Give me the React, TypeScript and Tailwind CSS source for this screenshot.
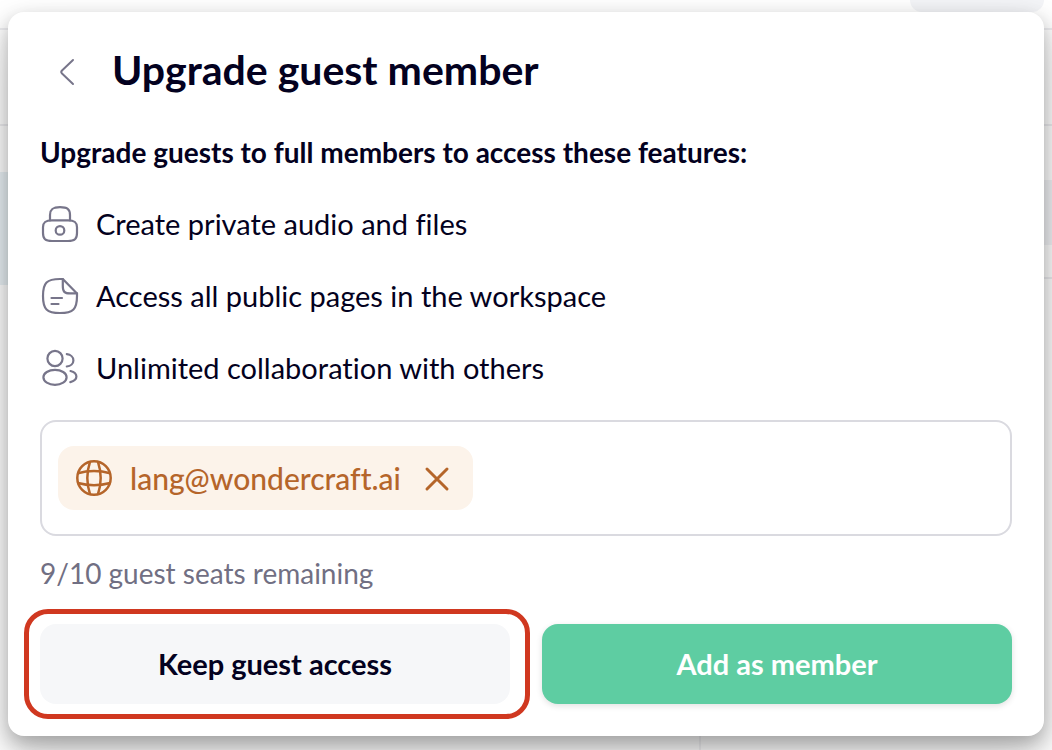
import type { ReactNode } from "react";

function FeatureIcon({ children }: { children: ReactNode }) {
  return (
    <svg
      viewBox="0 0 40 40"
      className="size-10 shrink-0 text-[#77758a]"
      fill="none"
      stroke="currentColor"
      strokeWidth="2.200"
      strokeLinecap="round"
      strokeLinejoin="round"
      aria-hidden="true"
    >
      {children}
    </svg>
  );
}

const features = [
  {
    label: "Create private audio and files",
    icon: (
      <FeatureIcon>
        <path d="M10 16.300V11C10 5.200 12.800 3.200 20 3.200S30 5.200 30 11v5.300" />
        <path d="M12 16.300h16c6.700 0 9 2.200 9 7v5.700c0 6-2.300 8-9 8H12c-6.700 0-9-2-9-8v-5.700c0-4.800 2.300-7 9-7Z" />
        <circle cx="20" cy="26.400" r="4.300" />
      </FeatureIcon>
    ),
  },
  {
    label: "Access all public pages in the workspace",
    icon: (
      <FeatureIcon>
        <path d="M22.800 3H20C6.800 3 3 6.800 3 20s3.800 17 17 17 17-3.800 17-17v-2.600Z" />
        <path d="M22.800 3v7c0 5.800 1.600 7.400 7.400 7.400H37" />
        <path d="M11.500 22h10.500M11.500 28h7" />
      </FeatureIcon>
    ),
  },
  {
    label: "Unlimited collaboration with others",
    icon: (
      <FeatureIcon>
        <circle cx="15" cy="10.500" r="7.600" />
        <ellipse cx="15" cy="29.300" rx="11.600" ry="7.500" />
        <path d="M26.800 6.200c3.800.4 6.600 2.900 6.600 6.200s-2.800 5.700-6.600 6.100" />
        <path d="M30.500 23c3.600 1 5.900 3 5.900 5.600s-2.400 4.600-6.100 5.500" />
      </FeatureIcon>
    ),
  },
];

function PageBehind() {
  return (
    <div aria-hidden="true" className="absolute inset-0 -z-10 flex flex-col bg-white">
      <div className="flex h-[30px] items-start justify-end border-b-2 border-[#ededf0] pr-2">
        <div className="h-3 w-[134px] rounded-b-2xl bg-[#f3f4f7]" />
      </div>
      <div className="h-24 border-b-2 border-[#ededf0]" />
      <div className="flex h-[153px] items-start justify-between border-b-2 border-[#ededf0] pt-[46px]">
        <div className="h-[113px] w-20 bg-[#eaf2f6]" />
        <div className="mt-2 h-[65px] w-20 bg-[#f3f4f7]" />
      </div>
      <div className="flex grow">
        <div className="w-2/3 border-r-2 border-[#f3f3f5]" />
      </div>
    </div>
  );
}

export default function App() {
  return (
    <main className="relative isolate min-h-screen overflow-hidden px-2 pt-3 pb-[14px] font-['Lato','Noto_Sans',sans-serif] text-[#030120] [font-variant-ligatures:none]">
      <PageBehind />
      <section
        role="dialog"
        aria-labelledby="dialog-title"
        className="rounded-2xl bg-white p-8 shadow-[0_8px_20px_rgba(0,0,0,0.28),0_24px_48px_rgba(0,0,0,0.16)]"
      >
        <header className="flex h-14 items-center gap-6 pl-2">
          <button type="button" aria-label="Back" className="size-10 text-[#77758a]">
            <svg
              viewBox="0 0 40 40"
              className="size-10"
              fill="none"
              stroke="currentColor"
              strokeWidth="2"
              strokeLinecap="round"
              strokeLinejoin="round"
              aria-hidden="true"
            >
              <path d="M25 8 14 18.500q-1.500 1.500 0 3L25 32" />
            </svg>
          </button>
          <h1 id="dialog-title" className="pb-1 text-[41px] leading-[52px] font-bold">
            Upgrade guest member
          </h1>
        </header>

        <h2 className="mt-[34px] text-[28px] leading-9 font-bold">
          Upgrade guests to full members to access these features:
        </h2>

        <ul className="mt-[34px] flex flex-col gap-8">
          {features.map((feature) => (
            <li key={feature.label} className="flex h-10 items-center gap-4">
              {feature.icon}
              <span className="text-[29px] leading-9">{feature.label}</span>
            </li>
          ))}
        </ul>

        <div className="mt-8 flex rounded-2xl border-2 border-[#dadae0] px-4 py-6">
          <div className="flex h-16 items-center rounded-2xl bg-[#fcf3ea] px-[18px] text-[#b5652a]">
            <svg
              viewBox="0 0 36 36"
              className="size-9 shrink-0"
              fill="none"
              stroke="currentColor"
              strokeWidth="2.500"
              aria-hidden="true"
            >
              <circle cx="18" cy="18" r="16.700" />
              <path d="M14 1.800Q8.600 18 14 34.200M22 1.800Q27.400 18 22 34.200" />
              <path d="M1.800 13.200Q18 8.800 34.200 13.200M1.800 23Q18 27.400 34.200 23" />
            </svg>
            <span className="ml-[18px] text-[30px] leading-9 font-medium">lang@wondercraft.ai</span>
            <button type="button" aria-label="Remove lang@wondercraft.ai" className="ml-[18px] size-9">
              <svg
                viewBox="0 0 36 36"
                className="size-9"
                fill="none"
                stroke="currentColor"
                strokeWidth="3"
                strokeLinecap="round"
                aria-hidden="true"
              >
                <path d="m8 9 20 20M28 9 8 29" />
              </svg>
            </button>
          </div>
        </div>

        <p className="mt-5 text-[28px] leading-[34px] text-[#716f83]">9/10 guest seats remaining</p>

        <div className="mt-[34px] grid grid-cols-2 gap-8">
          <div className="relative">
            <button
              type="button"
              className="h-20 w-full rounded-2xl bg-[#f6f7f9] text-[29px] leading-9 font-bold"
            >
              Keep guest access
            </button>
            <div
              aria-hidden="true"
              className="pointer-events-none absolute -inset-y-[15px] -right-5 -left-4 rounded-3xl border-5 border-[#d03820]"
            />
          </div>
          <button
            type="button"
            className="h-20 w-full rounded-2xl bg-[#5ecda2] text-[29px] leading-9 font-bold text-white shadow-[0_2px_6px_rgba(0,0,0,0.12)]"
          >
            Add as member
          </button>
        </div>
      </section>
    </main>
  );
}
